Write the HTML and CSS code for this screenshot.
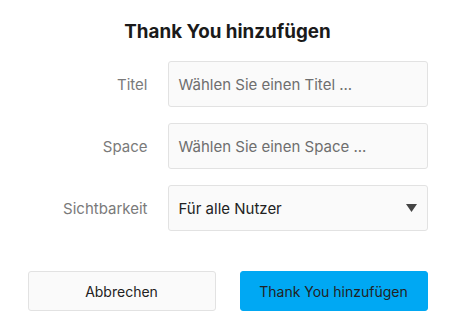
FILE: index.html
```html
<!DOCTYPE html>
<html lang="de">
<head>
<meta charset="utf-8">
<link rel="stylesheet" href="styles.css">
</head>
<body>
<div class="dialog">
  <h1 class="title">Thank You hinzufügen</h1>
  <div class="form">
    <div class="row">
      <label class="label">Titel</label>
      <div class="field placeholder">Wählen Sie einen Titel ...</div>
    </div>
    <div class="row">
      <label class="label">Space</label>
      <div class="field placeholder">Wählen Sie einen Space ...</div>
    </div>
    <div class="row">
      <label class="label">Sichtbarkeit</label>
      <div class="field select">
        <span>Für alle Nutzer</span>
        <svg class="caret" width="11" height="8" viewBox="0 0 11 8"><path d="M0 0H11L5.5 8Z" fill="#444"/></svg>
      </div>
    </div>
  </div>
  <div class="actions">
    <button class="btn btn-cancel">Abbrechen</button>
    <button class="btn btn-primary">Thank You hinzufügen</button>
  </div>
</div>
</body>
</html>
```

FILE: styles.css
```css
html, body {
  margin: 0;
  padding: 0;
  background: #ffffff;
}
body {
  font-family: Inter, "Noto Sans", sans-serif;
  color: #222;
}
.dialog {
  width: 400px;
  margin: 0 auto;
  padding-top: 20px;
}
.title {
  margin: 0 0 17px 0;
  text-align: center;
  font-size: 18.8px;
  font-weight: 700;
  line-height: 24px;
  color: #1a1a1a;
}
.form {
  display: flex;
  flex-direction: column;
  gap: 16px;
}
.row {
  display: grid;
  grid-template-columns: 120px 260px;
  column-gap: 20px;
  align-items: center;
}
.label {
  text-align: right;
  font-size: 15px;
  color: #7a7a7a;
}
.field {
  box-sizing: border-box;
  height: 46px;
  border: 1px solid #e2e2e2;
  border-radius: 3px;
  background: #fafafa;
  padding: 0 10px;
  display: flex;
  align-items: center;
  font-size: 15px;
}
.placeholder {
  color: #6e6e6e;
}
.select {
  justify-content: space-between;
  color: #222;
}
.actions {
  display: flex;
  gap: 24px;
  margin-top: 40px;
}
.btn {
  flex: 1;
  height: 40px;
  box-sizing: border-box;
  border-radius: 3px;
  font-family: Inter, "Noto Sans", sans-serif;
  font-size: 14px;
  color: #222;
  cursor: pointer;
}
.btn-cancel {
  background: #fafafa;
  border: 1px solid #e2e2e2;
}
.btn-primary {
  background: #00a8f3;
  border: 1px solid #00a8f3;
}
```
